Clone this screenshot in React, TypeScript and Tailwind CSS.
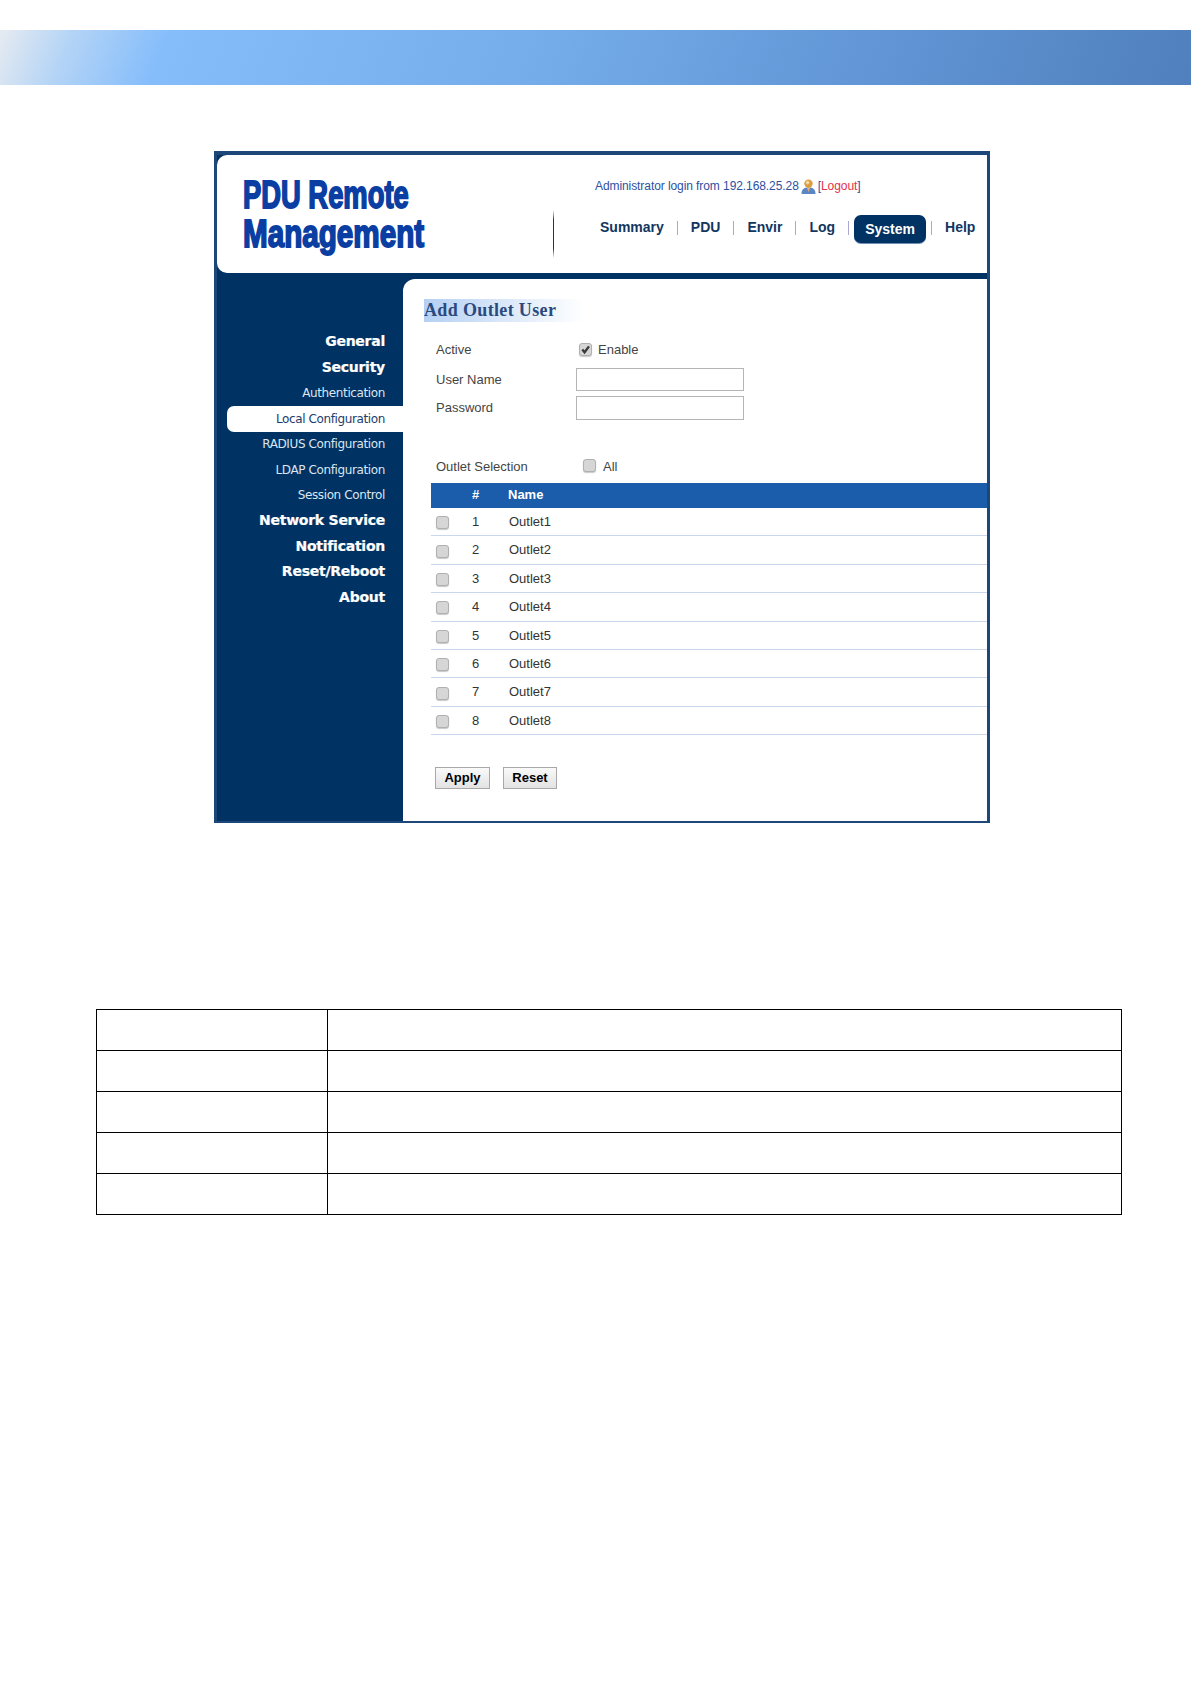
const sideItems = [
  { label: "General", main: true },
  { label: "Security", main: true },
  { label: "Authentication" },
  { label: "Local Configuration", active: true },
  { label: "RADIUS Configuration" },
  { label: "LDAP Configuration" },
  { label: "Session Control" },
  { label: "Network Service", main: true },
  { label: "Notification", main: true },
  { label: "Reset/Reboot", main: true },
  { label: "About", main: true },
];

const outlets = [1, 2, 3, 4, 5, 6, 7, 8];

function CheckBox({ checked, className = "" }: { checked?: boolean; className?: string }) {
  return (
    <div className={`flex h-[13px] w-[13px] shrink-0 items-center justify-center rounded-[3px] border border-[#b0b0b0] bg-[#d6d6d6] shadow-[0_1px_1px_#c8c8c8] ${className}`}>
      {checked && (
        <svg viewBox="0 0 12 12" className="h-[11px] w-[11px]">
          <path d="M2.5 6 L5 9 L9.8 2.6" fill="none" stroke="#3a3a3a" strokeWidth="2.6" />
        </svg>
      )}
    </div>
  );
}

function UserIcon() {
  return (
    <svg viewBox="0 0 15 15" className="mx-[2px] mt-[2px] h-[15px] w-[15px] shrink-0">
      <path d="M0.5 15 C0.5 10 3 8.5 7.5 8.5 C12 8.5 14.5 10 14.5 15 Z" fill="#5b86c4" />
      <path d="M5.8 8.5 L9.2 8.5 L7.5 13 Z" fill="#e8b070" />
      <circle cx="7.5" cy="4.6" r="4.2" fill="#dd9c3e" />
      <circle cx="6.6" cy="3.6" r="1.8" fill="#f5d9a0" />
    </svg>
  );
}

function NavSep({ className }: { className: string }) {
  return <div className={`mb-[3px] h-[14px] w-px bg-[#a9a9cf] ${className}`} />;
}

function NavLink({ label }: { label: string }) {
  return <span className="mb-[4px] text-[14px] font-bold leading-none text-[#12365f]">{label}</span>;
}

export default function App() {
  return (
    <div className="min-h-[1684px] bg-white pt-[30px] [font-family:'Liberation_Sans',Arial,sans-serif]">
      <div className="h-[55px] bg-[linear-gradient(112deg,#e6ebf1_0%,#b4d4f6_6%,#85bdfb_14%,#74ade9_45%,#6296d6_72%,#5080bd_100%)]" />

      {/* device web page screenshot */}
      <div className="ml-[214px] mt-[66px] h-[672px] w-[776px] border-x-[3px] border-b-[2px] border-t-[4px] border-[#1c4778] bg-[#003263]">
        <header className="flex h-[118px] rounded-l-[10px] bg-white">
          <div className="w-[336px] pl-[26px] pt-[21px]">
            <div className="text-[38px] font-bold leading-[39px] text-[#0a3ea3] [-webkit-text-stroke:1.8px_#0a3ea3]">
              <div className="origin-left scale-x-[0.72] whitespace-nowrap">PDU Remote</div>
              <div className="origin-left scale-x-[0.78] whitespace-nowrap">Management</div>
            </div>
          </div>
          <div className="mt-[55px] h-[48px] w-px bg-[linear-gradient(180deg,#ffffff,#0a2fb0_20%,#0a2fb0_80%,#ffffff)]" />
          <div className="pl-[41px]">
            <div className="mt-[23px] flex h-[15px] items-center text-[12px] text-[#2f4f9f]">
              <span className="tracking-[-0.08px]">Administrator login from 192.168.25.28</span>
              <UserIcon />
              <span className="tracking-[-0.08px]">
                [<span className="text-[#e2334a]">Logout</span>]
              </span>
            </div>
            <nav className="mt-[22px] flex h-[28px] items-center pl-[5px]">
              <NavLink label="Summary" />
              <NavSep className="mx-[13px]" />
              <NavLink label="PDU" />
              <NavSep className="mx-[13px]" />
              <NavLink label="Envir" />
              <NavSep className="mx-[13px]" />
              <NavLink label="Log" />
              <NavSep className="ml-[13px] mr-[5px]" />
              <div className="flex h-[28px] w-[72px] items-center justify-center rounded-[7px] bg-[#003263] text-[14px] font-bold text-white shadow-[0_1px_0_#6f8fb5]">
                System
              </div>
              <NavSep className="ml-[5px] mr-[13px]" />
              <NavLink label="Help" />
            </nav>
          </div>
        </header>

        <div className="mt-[6px] flex h-[542px]">
          <aside className="w-[186px] pt-[50px]">
            {sideItems.map((item) => (
              <div
                key={item.label}
                className={`flex items-center justify-end pr-[18px] [font-family:'DejaVu_Sans',sans-serif] ${
                  item.main
                    ? "text-[14px] font-bold tracking-[-0.25px] text-white [-webkit-text-stroke:0.2px_#ffffff]"
                    : "text-[12px] tracking-[-0.38px]"
                } ${item.active ? "ml-[10px] h-[26px] rounded-l-[7px] bg-white text-[#1b3c6b]" : item.main ? "h-[25.5px]" : "h-[25.5px] text-[#dbe6f2]"}`}
              >
                {item.label}
              </div>
            ))}
          </aside>

          <main className="flex-1 rounded-tl-[12px] bg-white pl-[21px] pt-[20px]">
            <div className="flex h-[23px] w-[160px] items-center bg-[linear-gradient(90deg,#b5d0f3,#ffffff)] text-[18px] font-bold tracking-[0.35px] text-[#2a4a7f] [font-family:'Liberation_Serif',serif]">
              Add Outlet User
            </div>

            <div className="text-[13px] text-[#444]">
              <div className="mt-[21px] flex h-[14px] items-center pl-[12px]">
                <span className="w-[143px]">Active</span>
                <CheckBox checked className="mb-[2px]" />
                <span className="ml-[6px]">Enable</span>
              </div>
              <div className="mt-[11px] flex h-[23px] items-center pl-[12px]">
                <span className="w-[140px]">User Name</span>
                <div className="h-[23px] w-[168px] border border-[#b5b5b5] bg-white" />
              </div>
              <div className="mt-[5px] flex h-[24px] items-center pl-[12px]">
                <span className="w-[140px]">Password</span>
                <div className="h-[24px] w-[168px] border border-[#b5b5b5] bg-white" />
              </div>
              <div className="mt-[40px] flex h-[14px] items-center pl-[12px]">
                <span className="w-[147px]">Outlet Selection</span>
                <CheckBox className="mb-[4px]" />
                <span className="ml-[7px]">All</span>
              </div>
            </div>

            <div className="ml-[7px] mt-[9px] flex h-[25px] items-center bg-[#1b5cab] text-[13px] font-bold text-white">
              <span className="mb-[2px] w-[77px] pl-[41px]">#</span>
              <span className="mb-[2px]">Name</span>
            </div>
            {outlets.map((n) => (
              <div key={n} className="ml-[7px] flex h-[28.4px] items-center border-b border-[#c9d6ec] text-[13px] text-[#333]">
                <div className="ml-[5px] mt-[2px]">
                  <CheckBox />
                </div>
                <span className="ml-[23px] w-[37px]">{n}</span>
                <span>Outlet{n}</span>
              </div>
            ))}

            <div className="ml-[11px] mt-[32px] flex gap-[13px]">
              <div className="flex h-[22px] w-[55px] items-center justify-center border border-[#a8a8a8] bg-[linear-gradient(180deg,#fafafa,#e2e2e2)] text-[13px] font-bold text-black">
                Apply
              </div>
              <div className="flex h-[22px] w-[54px] items-center justify-center border border-[#a8a8a8] bg-[linear-gradient(180deg,#fafafa,#e2e2e2)] text-[13px] font-bold text-black">
                Reset
              </div>
            </div>
          </main>
        </div>
      </div>

      {/* empty table below the screenshot */}
      <table className="ml-[96px] mt-[186px] w-[1026px] table-fixed border-collapse">
        <tbody>
          {[0, 1, 2, 3, 4].map((r) => (
            <tr key={r} className="h-[41px]">
              <td className="w-[231px] border border-black" />
              <td className="border border-black" />
            </tr>
          ))}
        </tbody>
      </table>
    </div>
  );
}
